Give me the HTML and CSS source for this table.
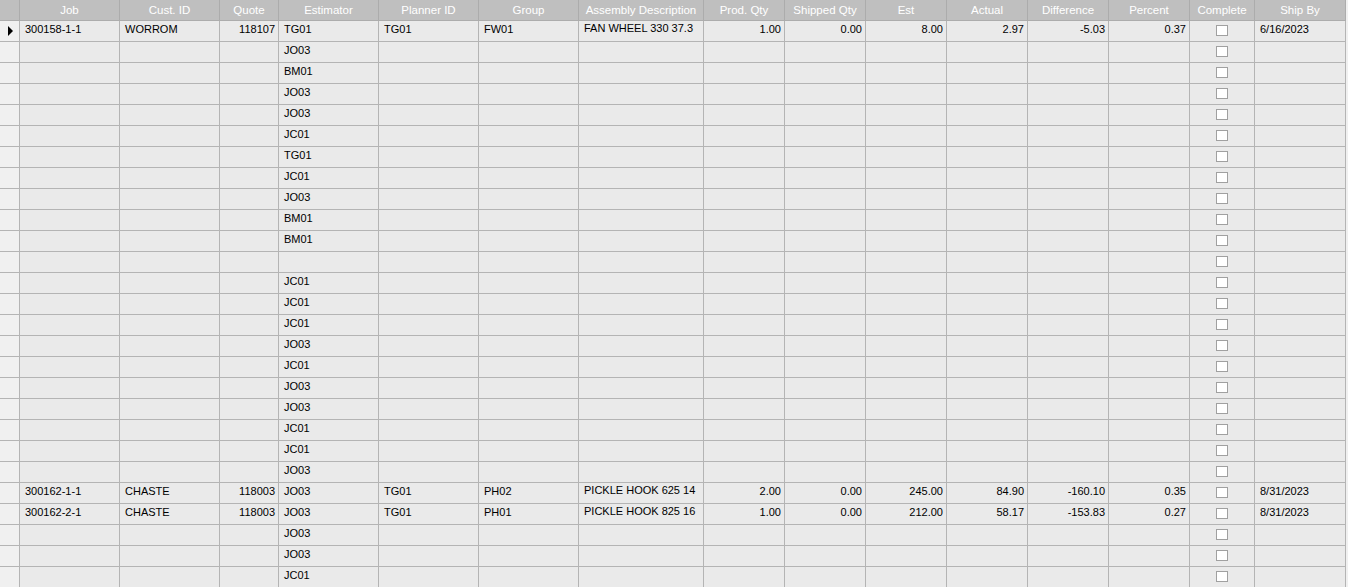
FILE: index.html
```html
<!DOCTYPE html>
<html lang="en">
<head>
    <meta charset="UTF-8">
    <meta name="viewport" content="width=device-width, initial-scale=1.0">
    <title>Job Costing</title>
    <link rel="stylesheet" href="styles.css">
</head>
<body>
    <div class="grid">
        <table>
            <thead>
                <tr>
                    <th class="col-ind"></th>
                    <th class="col-job">Job</th>
                    <th class="col-cust">Cust. ID</th>
                    <th class="col-quote">Quote</th>
                    <th class="col-est">Estimator</th>
                    <th class="col-plan">Planner ID</th>
                    <th class="col-group">Group</th>
                    <th class="col-desc">Assembly Description</th>
                    <th class="col-num">Prod. Qty</th>
                    <th class="col-num">Shipped Qty</th>
                    <th class="col-num">Est</th>
                    <th class="col-num">Actual</th>
                    <th class="col-num">Difference</th>
                    <th class="col-num">Percent</th>
                    <th class="col-check">Complete</th>
                    <th class="col-ship">Ship By</th>
                </tr>
            </thead>
            <tbody id="rows">
                <!-- rows are built below -->
            </tbody>
        </table>
    </div>
    <script>
        const estimators = ['TG01', 'JO03', 'BM01', 'JO03', 'JO03', 'JC01', 'TG01', 'JC01', 'JO03', 'BM01',
            'BM01', '', 'JC01', 'JC01', 'JC01', 'JO03', 'JC01', 'JO03', 'JO03', 'JC01',
            'JC01', 'JO03', 'JO03', 'JO03', 'JO03', 'JO03', 'JC01'];

        // rows that carry a job header, by index
        const jobs = {
            0: ['300158-1-1', 'WORROM', '118107', 'TG01', 'FW01', 'FAN WHEEL 330 37.3', '1.00', '0.00', '8.00', '2.97', '-5.03', '0.37', '6/16/2023'],
            22: ['300162-1-1', 'CHASTE', '118003', 'TG01', 'PH02', 'PICKLE HOOK 625 14', '2.00', '0.00', '245.00', '84.90', '-160.10', '0.35', '8/31/2023'],
            23: ['300162-2-1', 'CHASTE', '118003', 'TG01', 'PH01', 'PICKLE HOOK 825 16', '1.00', '0.00', '212.00', '58.17', '-153.83', '0.27', '8/31/2023']
        };

        const body = document.getElementById('rows');
        estimators.forEach((est, i) => {
            const j = jobs[i] || Array(13).fill('');
            const row = document.createElement('tr');
            row.innerHTML = `
                <td class="ind">${i === 0 ? '<span class="arrow"></span>' : ''}</td>
                <td>${j[0]}</td>
                <td>${j[1]}</td>
                <td class="right">${j[2]}</td>
                <td>${est}</td>
                <td>${j[3]}</td>
                <td>${j[4]}</td>
                <td class="desc">${j[5]}</td>
                <td class="right">${j[6]}</td>
                <td class="right">${j[7]}</td>
                <td class="right">${j[8]}</td>
                <td class="right">${j[9]}</td>
                <td class="right">${j[10]}</td>
                <td class="right">${j[11]}</td>
                <td class="check"><span class="box"></span></td>
                <td>${j[12]}</td>
            `;
            body.appendChild(row);
        });
    </script>
</body>
</html>
```

FILE: styles.css
```css
html, body {
    margin: 0;
    padding: 0;
    height: 100%;
    overflow: hidden;
}
body {
    font-family: "Liberation Sans", Arial, sans-serif;
    font-size: 11px;
    color: #000;
    background-color: #f0f0f0;
}
.grid {
    width: 1346px;
}
table {
    width: 1346px;
    table-layout: fixed;
    border-collapse: separate;
    border-spacing: 0;
}
th, td {
    box-sizing: border-box;
    border-right: 1px solid #b4b4b4;
    border-bottom: 1px solid #b4b4b4;
    white-space: nowrap;
    overflow: hidden;
}
th {
    height: 21px;
    padding: 0 2px;
    background-color: #bfbfbf;
    color: #fff;
    font-size: 11.5px;
    font-weight: normal;
    text-align: center;
    vertical-align: middle;
    line-height: 13px;
    border-right-color: #acacac;
    border-bottom-color: #acacac;
}
.col-ind { width: 20px; }
.col-job, .col-cust, .col-est, .col-plan, .col-group { width: 100px; }
.col-quote { width: 59px; }
.col-desc { width: 125px; }
.col-num { width: 81px; }
.col-check { width: 65px; }
.col-ship { width: 91px; }
td {
    height: 21px;
    padding: 2px 5px 0;
    line-height: 13px;
    vertical-align: top;
    background-color: #eaeaea;
}
td.right {
    text-align: right;
    padding-right: 3px;
}
td.desc {
    padding-top: 1px;
}
td.ind {
    background-color: #f0f0f0;
    padding: 0;
    position: relative;
}
.arrow {
    position: absolute;
    left: 8px;
    top: 5px;
    width: 0;
    height: 0;
    border-top: 5px solid transparent;
    border-bottom: 5px solid transparent;
    border-left: 5px solid #000;
}
td.check {
    padding: 4px 0 0;
    text-align: center;
}
.box {
    display: inline-block;
    width: 12px;
    height: 11px;
    box-sizing: border-box;
    border: 1px solid #a0a0a0;
    background-color: #fff;
    vertical-align: top;
}
```
